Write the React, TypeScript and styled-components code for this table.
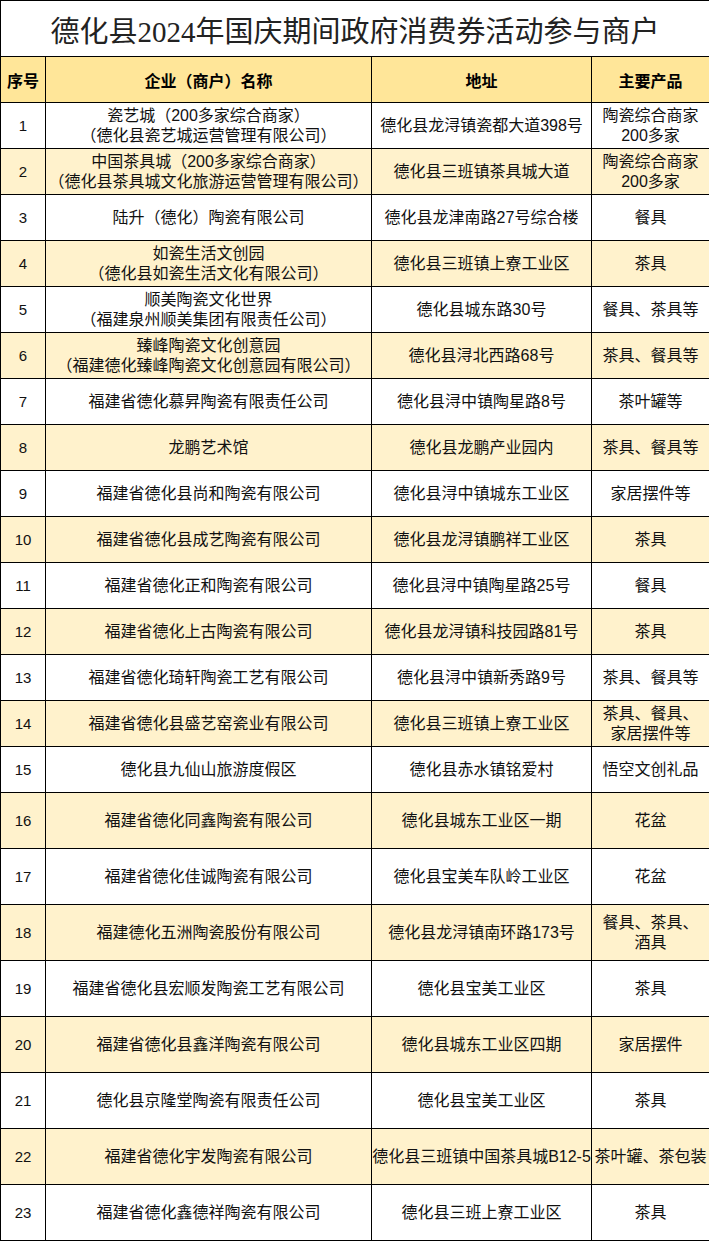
import styled, { createGlobalStyle } from 'styled-components';

type Shop = {
  name: string[];
  address: string;
  products: string[];
};

const shops: Shop[] = [
  { name: ['瓷艺城（200多家综合商家）', '（德化县瓷艺城运营管理有限公司）'], address: '德化县龙浔镇瓷都大道398号', products: ['陶瓷综合商家', '200多家'] },
  { name: ['中国茶具城（200多家综合商家）', '（德化县茶具城文化旅游运营管理有限公司）'], address: '德化县三班镇茶具城大道', products: ['陶瓷综合商家', '200多家'] },
  { name: ['陆升（德化）陶瓷有限公司'], address: '德化县龙津南路27号综合楼', products: ['餐具'] },
  { name: ['如瓷生活文创园', '（德化县如瓷生活文化有限公司）'], address: '德化县三班镇上寮工业区', products: ['茶具'] },
  { name: ['顺美陶瓷文化世界', '（福建泉州顺美集团有限责任公司）'], address: '德化县城东路30号', products: ['餐具、茶具等'] },
  { name: ['臻峰陶瓷文化创意园', '（福建德化臻峰陶瓷文化创意园有限公司）'], address: '德化县浔北西路68号', products: ['茶具、餐具等'] },
  { name: ['福建省德化慕昇陶瓷有限责任公司'], address: '德化县浔中镇陶星路8号', products: ['茶叶罐等'] },
  { name: ['龙鹏艺术馆'], address: '德化县龙鹏产业园内', products: ['茶具、餐具等'] },
  { name: ['福建省德化县尚和陶瓷有限公司'], address: '德化县浔中镇城东工业区', products: ['家居摆件等'] },
  { name: ['福建省德化县成艺陶瓷有限公司'], address: '德化县龙浔镇鹏祥工业区', products: ['茶具'] },
  { name: ['福建省德化正和陶瓷有限公司'], address: '德化县浔中镇陶星路25号', products: ['餐具'] },
  { name: ['福建省德化上古陶瓷有限公司'], address: '德化县龙浔镇科技园路81号', products: ['茶具'] },
  { name: ['福建省德化琦轩陶瓷工艺有限公司'], address: '德化县浔中镇新秀路9号', products: ['茶具、餐具等'] },
  { name: ['福建省德化县盛艺窑瓷业有限公司'], address: '德化县三班镇上寮工业区', products: ['茶具、餐具、', '家居摆件等'] },
  { name: ['德化县九仙山旅游度假区'], address: '德化县赤水镇铭爱村', products: ['悟空文创礼品'] },
  { name: ['福建省德化同鑫陶瓷有限公司'], address: '德化县城东工业区一期', products: ['花盆'] },
  { name: ['福建省德化佳诚陶瓷有限公司'], address: '德化县宝美车队岭工业区', products: ['花盆'] },
  { name: ['福建德化五洲陶瓷股份有限公司'], address: '德化县龙浔镇南环路173号', products: ['餐具、茶具、', '酒具'] },
  { name: ['福建省德化县宏顺发陶瓷工艺有限公司'], address: '德化县宝美工业区', products: ['茶具'] },
  { name: ['福建省德化县鑫洋陶瓷有限公司'], address: '德化县城东工业区四期', products: ['家居摆件'] },
  { name: ['德化县京隆堂陶瓷有限责任公司'], address: '德化县宝美工业区', products: ['茶具'] },
  { name: ['福建省德化宇发陶瓷有限公司'], address: '德化县三班镇中国茶具城B12-5', products: ['茶叶罐、茶包装'] },
  { name: ['福建省德化鑫德祥陶瓷有限公司'], address: '德化县三班上寮工业区', products: ['茶具'] },
];

export default function App() {
  return (
    <Sheet>
      <GlobalStyle />
      <colgroup>
        <col style={{ width: 45 }} />
        <col style={{ width: 326 }} />
        <col style={{ width: 220 }} />
        <col style={{ width: 118 }} />
      </colgroup>
      <thead>
        <tr>
          <TitleCell colSpan={4}>德化县2024年国庆期间政府消费券活动参与商户</TitleCell>
        </tr>
        <tr>
          <HeadCell>序号</HeadCell>
          <HeadCell>企业（商户）名称</HeadCell>
          <HeadCell>地址</HeadCell>
          <HeadCell>主要产品</HeadCell>
        </tr>
      </thead>
      <tbody>
        {shops.map((shop, i) => (
          <Row key={i} $shaded={i % 2 === 1} $tall={i >= 15}>
            <NumCell>{i + 1}</NumCell>
            <Cell>
              {shop.name.map((line) => (
                <Line key={line}>{line}</Line>
              ))}
            </Cell>
            <Cell $tight>{shop.address}</Cell>
            <Cell $tight>
              {shop.products.map((line) => (
                <Line key={line}>{line}</Line>
              ))}
            </Cell>
          </Row>
        ))}
      </tbody>
    </Sheet>
  );
}

const GlobalStyle = createGlobalStyle`
  body {
    margin: 0;
    background: #ffffff;
    color: #000000;
    font-family: "Liberation Sans", "Noto Sans CJK SC", sans-serif;
    text-spacing-trim: space-all;
    font-feature-settings: "chws" 0, "halt" 0;
  }
`;

const Sheet = styled.table`
  width: 709px;
  border-collapse: collapse;
  table-layout: fixed;
`;

const TitleCell = styled.th`
  height: 55px;
  border: 1px solid #000;
  font-family: "Liberation Serif", "Noto Sans CJK SC", serif;
  font-size: 29px;
  font-weight: normal;
  color: #222;
  text-align: center;
  padding: 0;
`;

const HeadCell = styled.th`
  height: 45px;
  border: 1px solid #000;
  background: #ffe699;
  font-family: "Noto Sans CJK SC", sans-serif;
  font-size: 16px;
  font-weight: 700;
  text-align: center;
  padding: 0;
`;

const Row = styled.tr<{ $shaded: boolean; $tall: boolean }>`
  height: ${({ $tall }) => ($tall ? '56px' : '46px')};
  background: ${({ $shaded }) => ($shaded ? '#fff2cc' : '#ffffff')};
`;

const Cell = styled.td<{ $tight?: boolean }>`
  border: 1px solid #000;
  text-align: center;
  vertical-align: middle;
  font-size: 16px;
  line-height: 20px;
  padding: ${({ $tight }) => ($tight ? '0' : '0 2px')};
  white-space: nowrap;
  overflow: hidden;
  color: #111;
`;

const NumCell = styled(Cell)`
  font-size: 15px;
`;

const Line = styled.div`
  line-height: 20px;
`;
